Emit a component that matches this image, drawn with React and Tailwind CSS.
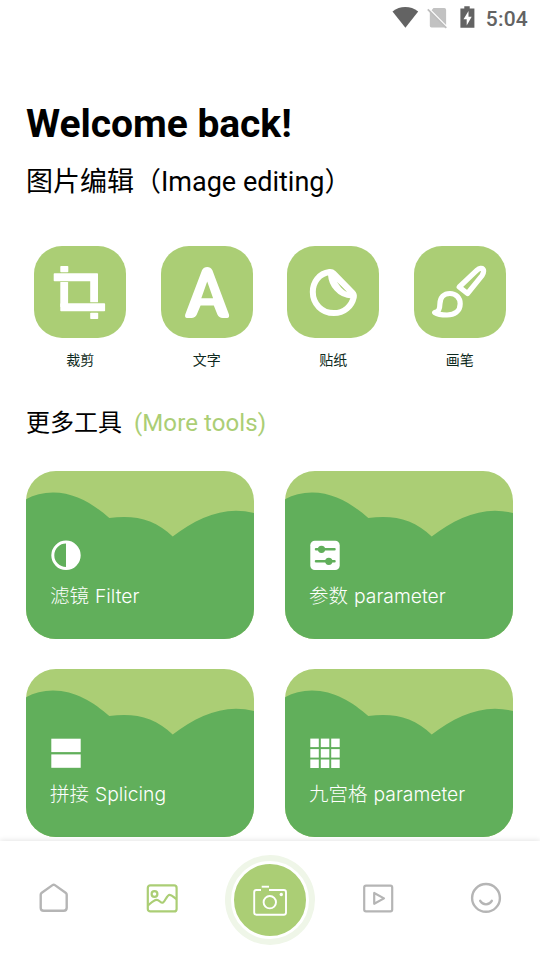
import React, { useState } from 'react';

const quickTools = [
  { id: 'crop', label: '裁剪', icon: <CropIcon /> },
  { id: 'text', label: '文字', icon: <TextIcon /> },
  { id: 'sticker', label: '贴纸', icon: <StickerIcon /> },
  { id: 'brush', label: '画笔', icon: <BrushIcon /> },
];

const moreTools = [
  { id: 'filter', zh: '滤镜', en: 'Filter', icon: <FilterIcon /> },
  { id: 'params', zh: '参数', en: 'parameter', icon: <SlidersIcon /> },
  { id: 'splice', zh: '拼接', en: 'Splicing', icon: <SpliceIcon /> },
  { id: 'grid', zh: '九宫格', en: 'parameter', icon: <GridIcon /> },
];

// Tile icons, all on a 92x92 canvas
function CropIcon() {
  return (
    <svg viewBox="0 0 92 92" className="h-full w-full" fill="#fff">
      <rect x="26.3" y="20" width="8" height="6.2" rx="0.8" />
      <rect x="26.3" y="36" width="7.8" height="25" rx="0.5" />
      <rect x="56.2" y="30" width="7.8" height="26.2" rx="0.5" />
      <rect x="56.2" y="66.8" width="8" height="6.2" rx="0.8" />
      <rect x="19.7" y="27.3" width="44.3" height="7.9" rx="0.8" />
      <rect x="26.3" y="57.3" width="44.8" height="8" rx="0.8" />
    </svg>
  );
}

function TextIcon() {
  return (
    <svg viewBox="0 0 92 92" className="h-full w-full" fill="#fff">
      <path
        fillRule="evenodd"
        d="M41 24.2C42.2 21.8 44 21 46.2 21s4 .8 5.200 3.200L67.600 67.500c1.200 3.200.3 4.500-2 4.500h-3.800c-2.600 0-4.400-1-5.400-3.400L52.800 59.400H39.600l-3.800 9.200c-1 2.400-2.800 3.400-5.400 3.400h-3.800c-2.300 0-3.200-1.300-2-4.500ZM46.200 35.500 40.300 52.300h11.800Z"
      />
    </svg>
  );
}

function StickerIcon() {
  return (
    <svg viewBox="0 0 92 92" className="h-full w-full" fill="none" stroke="#fff" strokeLinejoin="round">
      <path
        strokeWidth="6"
        d="M42.500 26C32 27.500 25.800 36 25.800 46c0 12 9.200 21.100 21 21.100 10.500 0 18-7 20-16.100.5-2.500-.3-3.200-1.500-4.500L46.500 27.300c-1.200-1.200-2.300-1.500-4-1.300Z"
      />
      <path strokeWidth="5" d="M43.500 28.500C44 38 51.500 49.500 65 50" />
      <path strokeWidth="3" d="M46 30.500C50 33.500 61 44 64 48.500 56 48 48.500 39 46 30.500" />
    </svg>
  );
}

function BrushIcon() {
  return (
    <svg viewBox="0 0 92 92" className="h-full w-full" fill="none" stroke="#fff" strokeWidth="5.200" strokeLinejoin="round">
      <path d="M20.700 66.500C24.500 65.500 25.800 64 25.900 58c.1-7 4.200-10.500 10-10.500 6 0 10.300 4.300 10.300 10.300 0 7.500-6 11.200-13.200 11.200-5.200 0-9.500-.6-12.300-2.500Z" />
      <path d="M45.200 41 63 24.200c2.500-2.200 5-2.200 6-1.200 1 1 .8 3.300-.8 6.300L53.500 47.500Z" />
    </svg>
  );
}

// Card icons, 30x30
function FilterIcon() {
  return (
    <svg viewBox="0 0 30 30" className="h-[30px] w-[30px]">
      <circle cx="15" cy="15.300" r="13.200" fill="none" stroke="#fff" strokeWidth="3" />
      <path d="M15 1.800a13.500 13.500 0 0 1 0 27Z" fill="#fff" />
    </svg>
  );
}

function SlidersIcon() {
  return (
    <svg viewBox="0 0 30 30" className="h-[30px] w-[30px]">
      <rect x="0.300" y="0.700" width="29.400" height="29.300" rx="4.500" fill="#fff" />
      <g fill="#61af5b" stroke="#61af5b" strokeWidth="2.500" strokeLinecap="round">
        <path d="M6 9.300h18.500M6 21.300h18.500" />
        <circle cx="11.500" cy="9.300" r="2.400" />
        <circle cx="18.800" cy="21.300" r="2.400" />
      </g>
    </svg>
  );
}

function SpliceIcon() {
  return (
    <svg viewBox="0 0 30 30" className="h-[30px] w-[30px]" fill="#fff">
      <rect x="0.300" y="0.700" width="29.400" height="13.400" />
      <rect x="0.300" y="16.400" width="29.400" height="13.400" />
    </svg>
  );
}

function GridIcon() {
  const steps = [0.3, 10.8, 21.2];
  return (
    <svg viewBox="0 0 30 30" className="h-[30px] w-[30px]" fill="#fff">
      {steps.map((y) => steps.map((x) => <rect key={`${x}-${y}`} x={x} y={y + 0.3} width="8.500" height="8.500" />))}
    </svg>
  );
}

function StatusBar() {
  return (
    <div className="flex h-[36px] items-center justify-end pr-3 text-[#636363]">
      <svg viewBox="0 0 88 36" className="h-[36px] w-[88px]">
        <path d="M.5 11.500C8 5.600 18.500 5.600 26.200 11.500L13.400 27.700Z" fill="#636363" />
        <path d="M41.500 8h10.800q1.800 0 1.800 1.800v15.200L39.600 10.300Z" fill="#c2c2c2" />
        <path d="M37.800 11.200 54 27.500H39.500q-1.700 0-1.700-1.800Z" fill="#c2c2c2" />
        <path d="M35.800 9.300 54.300 27.800" stroke="#bdbdbd" strokeWidth="1.700" />
        <path d="M72.300 6.200h5.400v2.200h4.700v19.400H68.400V8.400h3.900Z" fill="#636363" />
        <path d="M76.500 11 71.500 19.200h3.200v6.200l5-8.600h-3.200Z" fill="#fff" />
      </svg>
      <span className="ml-[6px] pt-[2px] text-[21px] font-medium leading-none tracking-[0.2px]">5:04</span>
    </div>
  );
}

function ToolCard({ tool }) {
  return (
    <button type="button" className="relative h-[168px] overflow-hidden rounded-[30px] bg-[#abce75] text-left">
      <svg viewBox="0 0 228 168" className="absolute inset-0 h-full w-full">
        <path
          d="M0 28.300C8 23.800 17 21.500 27 21.500 49 21.500 68 33.500 83.300 47 108 43.500 129 48 146.700 65.500 166 50.500 188 39.700 210 39.700q9 0 18 2.300V168H0Z"
          fill="#61af5b"
        />
      </svg>
      <div className="relative flex h-full flex-col pl-[25px] pt-[69px]">
        {tool.icon}
        <span className="-ml-px mt-[11px] flex items-baseline gap-[6px] font-['Inter','Noto_Sans_CJK_SC',sans-serif] text-[19.500px] font-light leading-[30px] text-white">
          <span>{tool.zh}</span>
          <span className="text-[19.300px]">{tool.en}</span>
        </span>
      </div>
    </button>
  );
}

function BottomNav({ active, onChange }) {
  const color = (id) => (active === id ? 'text-[#abce75]' : 'text-[#b5b5b5]');

  return (
    <nav className="relative grid h-[119px] shrink-0 grid-cols-5 justify-items-center bg-white pt-[41px] shadow-[0_-1px_5px_rgba(0,0,0,0.1)]">
      <button type="button" className={`h-8 w-8 ${color('home')}`} onClick={() => onChange('home')}>
        <svg viewBox="0 0 32 32" className="h-8 w-8" fill="none" stroke="currentColor" strokeWidth="2.400" strokeLinejoin="round">
          <path d="M2.700 12.800c0-1 .4-1.500 1.100-2L14.500 3.100q1.200-.9 2.400 0l10.700 7.700c.7.500 1.100 1 1.100 2V25.700q0 3-3 3H5.700q-3 0-3-3Z" />
        </svg>
      </button>
      <button type="button" className={`h-8 w-8 ${color('gallery')}`} onClick={() => onChange('gallery')}>
        <svg viewBox="0 0 32 32" className="h-8 w-8" fill="none" stroke="currentColor" strokeWidth="2.200" strokeLinejoin="round">
          <rect x="1.800" y="3.400" width="28.800" height="26" rx="2.500" />
          <circle cx="8.500" cy="12" r="2.900" />
          <path d="M2 23.500C5 21 7.500 18 10.500 17.800s4.200 4 6.500 2.800 4-7.800 6.500-7.800 4.500 2.700 6.800 4.200" />
        </svg>
      </button>
      <button
        type="button"
        className="-mt-[27px] flex h-[90px] w-[90px] items-center justify-center rounded-full bg-[#eff6e8]"
        onClick={() => onChange('camera')}
      >
        <span className="flex h-[78px] w-[78px] items-center justify-center rounded-full border-[3px] border-white bg-[#abce75]">
          <svg viewBox="0 0 36 36" className="h-9 w-9" fill="none" stroke="#fff" strokeWidth="1.900">
            <path d="M9 8H4.400q-2.200 0-2.200 2.200V30.500q0 2.200 2.200 2.200h27.400q2.200 0 2.200-2.200V10.200q0-2.200-2.200-2.200H17" />
            <path d="M9.700 4.700h7.300" />
            <circle cx="17.800" cy="20.200" r="6.200" />
            <circle cx="29.300" cy="12.500" r="1.700" fill="#fff" stroke="none" />
          </svg>
        </span>
      </button>
      <button type="button" className={`h-8 w-8 ${color('video')}`} onClick={() => onChange('video')}>
        <svg viewBox="0 0 32 32" className="h-8 w-8" fill="none" stroke="currentColor" strokeWidth="2.200" strokeLinejoin="round">
          <rect x="2.200" y="3.700" width="28" height="25.600" rx="1.800" />
          <path d="M12.200 11v10.800L22 16.400Z" />
        </svg>
      </button>
      <button type="button" className={`h-8 w-8 ${color('me')}`} onClick={() => onChange('me')}>
        <svg viewBox="0 0 32 32" className="h-8 w-8" fill="none" stroke="currentColor" strokeWidth="2.400" strokeLinecap="round">
          <circle cx="16" cy="15.900" r="13.900" />
          <path d="M10.200 18.800c2.800 4.700 8.800 4.700 11.600 0" />
        </svg>
      </button>
    </nav>
  );
}

export default function App() {
  const [tab, setTab] = useState('gallery');

  return (
    <div className="flex h-screen flex-col overflow-hidden bg-white font-['Roboto','Noto_Sans_CJK_SC',sans-serif] text-black">
      <StatusBar />
      <main className="min-h-0 flex-1">
        <header className="px-[26px] pt-[64px]">
          <h1 className="text-[39px] font-bold leading-[48px] tracking-[-0.05px]">Welcome back!</h1>
          <p className="mt-[16px] text-[27px] leading-[36px]">图片编辑（Image editing）</p>
        </header>

        <div className="mx-[17px] mt-[46px] grid grid-cols-4 justify-items-center">
          {quickTools.map((tool) => (
            <button key={tool.id} type="button" className="flex flex-col items-center">
              <span className="h-[92px] w-[92px] rounded-[28px] bg-[#abce75]">{tool.icon}</span>
              <span className="mt-[12px] text-sm leading-5 text-[#0d2a20]">{tool.label}</span>
            </button>
          ))}
        </div>

        <h2 className="mt-[37px] flex items-baseline gap-3 px-[26px] text-2xl leading-8">
          更多工具 <span className="tracking-[0.1px] text-[#abce75]">(More tools)</span>
        </h2>

        <div className="mt-[32px] grid grid-cols-2 gap-x-[31px] gap-y-[30px] pl-[26px] pr-[27px]">
          {moreTools.map((tool) => (
            <ToolCard key={tool.id} tool={tool} />
          ))}
        </div>
      </main>
      <BottomNav active={tab} onChange={setTab} />
    </div>
  );
}
